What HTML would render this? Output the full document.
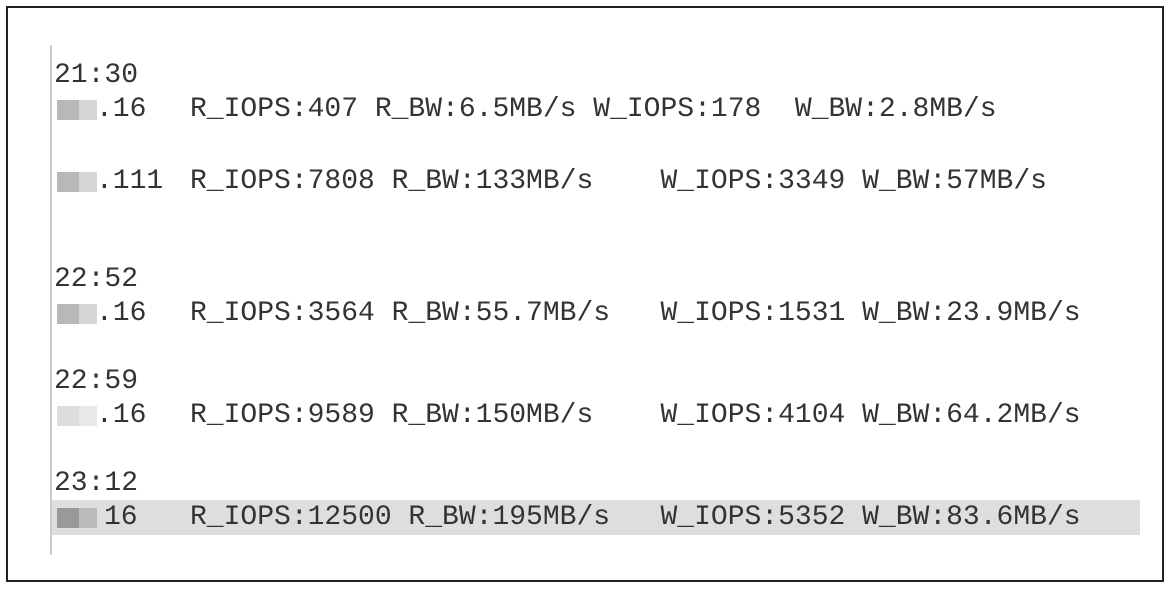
<!DOCTYPE html>
<html><head><style>
body{margin:0;width:1172px;height:591px;background:#fff;position:relative;overflow:hidden}
.box{position:absolute;left:6px;top:6px;width:1158px;height:576px;border:2px solid #222;box-sizing:border-box}
.vl{position:absolute;left:50px;top:45px;width:2px;height:510px;background:#ccc}
.hl{position:absolute;left:52px;top:500px;width:1088px;height:35px;background:#dedede}
.t{position:absolute;font-family:"Liberation Mono",monospace;font-size:28px;line-height:34px;color:#333;white-space:pre;margin:0}
.sq{position:absolute;width:22px;height:20px;background:#b8b8b8}
.sq2{position:absolute;width:18px;height:20px;background:#d6d6d6}
</style></head><body>
<div class="box"></div>
<div class="vl"></div>
<div class="hl"></div>
<div class="sq" style="left:57px;top:100px"></div><div class="sq2" style="left:79px;top:100px"></div>
<div class="sq" style="left:57px;top:172px"></div><div class="sq2" style="left:79px;top:172px"></div>
<div class="sq" style="left:57px;top:304px"></div><div class="sq2" style="left:79px;top:304px"></div>
<div class="sq" style="left:57px;top:406px;background:#ddd"></div><div class="sq2" style="left:79px;top:406px;background:#e8e8e8"></div>
<div class="sq" style="left:57px;top:508px;background:#999"></div><div class="sq2" style="left:79px;top:508px;background:#bbb"></div>
<div class="t" style="left:54px;top:59px">21:30</div>
<div class="t" style="left:96px;top:93px">.16</div>
<div class="t" style="left:190px;top:93px">R_IOPS:407 R_BW:6.5MB/s W_IOPS:178  W_BW:2.8MB/s</div>
<div class="t" style="left:96px;top:165px">.111</div>
<div class="t" style="left:190px;top:165px">R_IOPS:7808 R_BW:133MB/s    W_IOPS:3349 W_BW:57MB/s</div>
<div class="t" style="left:54px;top:263px">22:52</div>
<div class="t" style="left:96px;top:297px">.16</div>
<div class="t" style="left:190px;top:297px">R_IOPS:3564 R_BW:55.7MB/s   W_IOPS:1531 W_BW:23.9MB/s</div>
<div class="t" style="left:54px;top:365px">22:59</div>
<div class="t" style="left:96px;top:399px">.16</div>
<div class="t" style="left:190px;top:399px">R_IOPS:9589 R_BW:150MB/s    W_IOPS:4104 W_BW:64.2MB/s</div>
<div class="t" style="left:54px;top:467px">23:12</div>
<div class="t" style="left:104px;top:501px">16</div>
<div class="t" style="left:190px;top:501px">R_IOPS:12500 R_BW:195MB/s   W_IOPS:5352 W_BW:83.6MB/s</div>
</body></html>
